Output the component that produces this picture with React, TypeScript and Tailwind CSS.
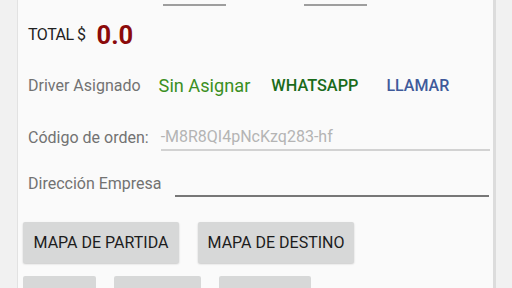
export default function App() {
  return (
    <div className="h-[288px] w-[512px] overflow-hidden bg-[#f1f1f1] font-['Roboto',sans-serif]">
      <div className="ml-[17px] h-full w-[479px] border-l border-[#e2e2e2] border-r-[3px] border-r-[#dcdcdc] bg-[#fafafa]">
        {/* underlines of the fields above */}
        <div className="flex h-[6px] items-end">
          <div className="ml-[145px] h-[2px] w-[63px] bg-[#9e9e9e]" />
          <div className="ml-[78px] h-[2px] w-[63px] bg-[#9e9e9e]" />
        </div>

        <div className="mt-[14px] flex items-center pl-[10px]">
          <span className="text-[16px] leading-[30px] tracking-[-0.5px] text-[#222]">TOTAL $</span>
          <span className="ml-[11px] text-[25.5px] font-bold leading-[30px] text-[#8b0a0a]">0.0</span>
        </div>

        <div className="mt-[25px] flex items-center pl-[10px] leading-[22px]">
          <span className="text-[16px] text-[#727272]">Driver Asignado</span>
          <span className="ml-[18px] text-[18.2px] text-[#3b8f22]">Sin Asignar</span>
          <button className="ml-[21px] text-[16.3px] font-medium text-[#1a6b1a]">WHATSAPP</button>
          <button className="ml-[28px] text-[16px] font-medium text-[#3f5a9a]">LLAMAR</button>
        </div>

        <div className="mt-[30px] flex items-end pl-[10px]">
          <span className="pb-[3px] text-[16px] leading-[20px] text-[#727272]">Código de orden:</span>
          <div className="ml-[12px] w-[329px] border-b-2 border-[#d2d2d2] pb-[2px] text-[16px] leading-[20px] text-[#b4b4b4]">
            -M8R8QI4pNcKzq283-hf
          </div>
        </div>

        <div className="mt-[22px] flex items-end pl-[10px]">
          <span className="pb-[3px] text-[16px] leading-[20px] text-[#727272]">Dirección Empresa</span>
          <div className="ml-[13px] h-[24px] w-[314px] border-b-2 border-[#777]" />
        </div>

        <div className="mt-[25px] flex gap-[19px] pl-[5px]">
          <button className="h-[41px] w-[156px] rounded-[2px] bg-[#d7d8d8] text-[16px] text-[#1c1c1c] shadow-[0_1px_2px_rgba(0,0,0,0.2)]">
            MAPA DE PARTIDA
          </button>
          <button className="h-[41px] w-[156px] rounded-[2px] bg-[#d7d8d8] text-[16px] text-[#1c1c1c] shadow-[0_1px_2px_rgba(0,0,0,0.2)]">
            MAPA DE DESTINO
          </button>
        </div>

        <div className="mt-[13px] flex gap-[18px] pl-[5px]">
          <div className="h-[41px] w-[73px] rounded-[2px] bg-[#d7d8d8]" />
          <div className="h-[41px] w-[87px] rounded-[2px] bg-[#d7d8d8]" />
          <div className="h-[41px] w-[92px] rounded-[2px] bg-[#d7d8d8]" />
        </div>
      </div>
    </div>
  )
}
